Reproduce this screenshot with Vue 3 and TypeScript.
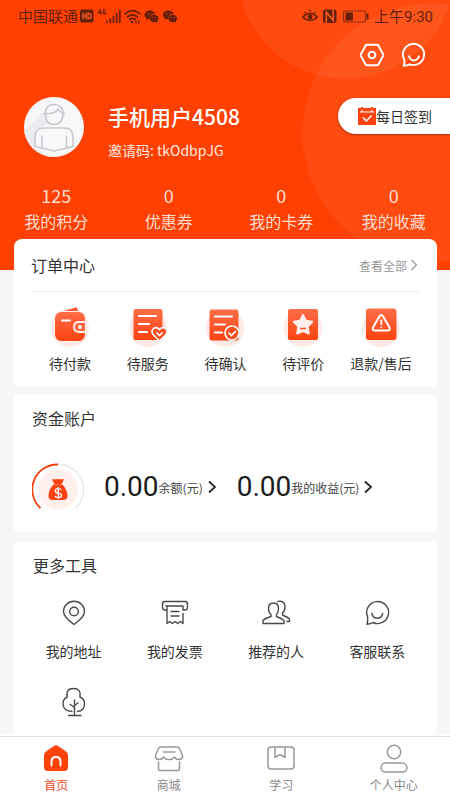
<script setup lang="ts">
interface Stat {
  value: string
  label: string
}

interface OrderEntry {
  icon: 'wallet' | 'service' | 'confirm' | 'star' | 'refund'
  label: string
}

interface Account {
  amount: string
  label: string
}

interface Tool {
  icon: 'pin' | 'invoice' | 'people' | 'chat' | 'tree'
  label?: string
}

interface Tab {
  icon: 'home' | 'shop' | 'book' | 'me'
  label: string
  active?: boolean
}

const stats: Stat[] = [
  { value: '125', label: '我的积分' },
  { value: '0', label: '优惠券' },
  { value: '0', label: '我的卡券' },
  { value: '0', label: '我的收藏' },
]

const orders: OrderEntry[] = [
  { icon: 'wallet', label: '待付款' },
  { icon: 'service', label: '待服务' },
  { icon: 'confirm', label: '待确认' },
  { icon: 'star', label: '待评价' },
  { icon: 'refund', label: '退款/售后' },
]

const accounts: Account[] = [
  { amount: '0.00', label: '余额(元)' },
  { amount: '0.00', label: '我的收益(元)' },
]

const tools: Tool[] = [
  { icon: 'pin', label: '我的地址' },
  { icon: 'invoice', label: '我的发票' },
  { icon: 'people', label: '推荐的人' },
  { icon: 'chat', label: '客服联系' },
  { icon: 'tree' },
]

const tabs: Tab[] = [
  { icon: 'home', label: '首页', active: true },
  { icon: 'shop', label: '商城' },
  { icon: 'book', label: '学习' },
  { icon: 'me', label: '个人中心' },
]
</script>

<template>
  <div class="page">
    <header class="hero">
      <div class="status">
        <div class="status-group">
          <span>中国联通</span>
          <svg class="status-icons" width="101" height="18" viewBox="0 0 101 18">
            <rect x="1" y="2.500" width="13.500" height="13" rx="2" fill="#64200a" />
            <path d="M4 5.800V12.200M7 5.800V12.200M4 9H7M9 6.300V11.700H10Q12 11.700 12 9Q12 6.300 10 6.300Z" fill="none" stroke="#ff5a26" stroke-width="1.300" />
            <path d="M21.500 2L19.200 5.600H22.900M21.900 3.600V7.400M26.400 3Q24.200 1.900 24.200 4.700Q24.200 7.600 26.400 6.800V5H25.200" fill="none" stroke="#64200a" stroke-width="1.100" />
            <path d="M28 13.500V16M31.300 11.500V16M34.500 9V16M37.700 6V16M40.800 3V16" stroke="#64200a" stroke-width="1.700" />
            <path d="M46 6.800Q53.500 0.500 61 6.800M48.500 9.800Q53.500 5.800 58.500 9.800M50.700 12.500Q53.500 10.500 56 12.300" fill="none" stroke="#64200a" stroke-width="1.700" stroke-linecap="round" />
            <circle cx="53" cy="15" r="1.300" fill="#64200a" />
            <path d="M57.500 13L55.500 15L57.500 17ZM59 13L61 15L59 17Z" fill="#64200a" />
            <g v-for="x in [65.500, 84]" :key="x" :transform="`translate(${x} 0)`">
              <path d="M5.500 3.500C2.400 3.500 0 5.400 0 8C0 9.400 .7 10.500 1.900 11.300L1.500 13L3.500 12L5.500 12.300C4.500 8.800 7.500 6.700 10.700 6.900C10 4.900 8 3.500 5.500 3.500Z" fill="#64200a" />
              <path d="M9.600 7.700C7 7.700 5.400 9.500 5.400 11.500C5.400 13.600 7.200 15.200 9.800 15.200L11.400 15L13 15.900L12.600 14.400C13.500 13.700 14 12.700 14 11.600C14 9.400 12.200 7.700 9.600 7.700Z" fill="#64200a" />
              <path d="M3.300 6.800H4.300M7 6.800H8M7.800 10.500H8.600M11 10.500H11.800" stroke="#ff4a12" stroke-width="1" />
            </g>
          </svg>
        </div>
        <div class="status-group">
          <svg width="68" height="18" viewBox="0 0 68 18">
            <path d="M0.800 10Q8 3 15.200 10Q8 17 0.800 10Z" fill="none" stroke="#64200a" stroke-width="1.500" />
            <circle cx="8" cy="10" r="2.400" fill="#64200a" />
            <path d="M2.500 4.800L4.200 6.500M8 2.500V5M13.500 4.800L11.800 6.500" stroke="#64200a" stroke-width="1.200" />
            <rect x="21" y="2.500" width="13.500" height="13.500" rx="2.500" fill="#64200a" />
            <path d="M24.300 16V5.200L31.200 13.500V2.500" fill="none" stroke="#ff5a24" stroke-width="1.500" />
            <rect x="41.500" y="4" width="22" height="11" rx="2" fill="none" stroke="#8c3015" stroke-width="1.200" />
            <rect x="43.500" y="5.500" width="7.500" height="8" fill="#64200a" />
            <path d="M65.500 6.500V12.500" stroke="#64200a" stroke-width="1.800" />
          </svg>
          <span>上午9:30</span>
        </div>
      </div>

      <div class="actions">
        <button type="button">
          <svg width="26" height="26" viewBox="0 0 26 26" fill="none" stroke="#fff" stroke-width="1.900" stroke-linejoin="round">
            <path d="M8 2.800H18Q19 2.800 19.500 3.700L24 12Q24.500 13 24 14L19.500 22.300Q19 23.200 18 23.200H8Q7 23.200 6.500 22.300L2 14Q1.500 13 2 12L6.500 3.700Q7 2.800 8 2.800Z" />
            <circle cx="13" cy="13" r="3.300" stroke-width="2.100" />
          </svg>
        </button>
        <button type="button">
          <svg width="26" height="26" viewBox="0 0 26 26" fill="none" stroke="#fff" stroke-width="1.900" stroke-linejoin="round" stroke-linecap="round">
            <path d="M3.200 17.500A10.600 10.600 0 1 1 8.600 22.300Q6 23.500 2.600 23.700Q3.800 20.800 3.200 17.500Z" />
            <path d="M8 14.300Q9.500 18.500 13 18.500Q16.500 18.500 18 14.300" />
          </svg>
        </button>
      </div>

      <div class="user">
        <svg width="60" height="60" viewBox="0 0 60 60">
          <defs><clipPath id="avatar-clip"><circle cx="30" cy="30" r="30" /></clipPath></defs>
          <g clip-path="url(#avatar-clip)">
            <rect width="60" height="60" fill="#f8f8fb" />
            <path d="M22 12L0 34V60H27L11 51V34L24 26Z" fill="#ebebf0" />
          </g>
          <g fill="none" stroke="#c9c9cd" stroke-width="1.600" stroke-linejoin="round">
            <path d="M21.500 16Q21.500 7.500 30 7.500Q39 7.500 39 17Q39 27.500 30 27.500Q21.500 27.500 21.500 17ZM19.500 16.500H25Q31 16.500 34 12Q36 16 41 16.500" />
            <path d="M11 49.500V40Q11 31 20 31H40Q49 31 49 40V49.500L30 54ZM18 38.500V51M42.500 38.500V51" />
          </g>
        </svg>
        <div class="identity">
          <h1>手机用户4508</h1>
          <p>邀请码: tkOdbpJG</p>
        </div>
        <button class="checkin" type="button">
          <svg width="18" height="18" viewBox="0 0 18 18">
            <path d="M0 1H3V0H5V1H13V0H15V1H18V18H0Z" fill="#ff4411" />
            <path d="M2 5H16M4 2.500V5M14 2.500V5" stroke="#fff" stroke-width="1" />
            <path d="M5 10.500L8.300 14L13.500 8.500" fill="none" stroke="#fff" stroke-width="1.500" />
          </svg>
          <span>每日签到</span>
        </button>
      </div>

      <ul class="stats">
        <li v-for="stat in stats" :key="stat.label">
          <span>{{ stat.value }}</span>
          <span>{{ stat.label }}</span>
        </li>
      </ul>
    </header>

    <main class="content">
      <section class="card orders">
        <div class="orders-head">
          <h2>订单中心</h2>
          <a href="#">
            <span>查看全部</span>
            <svg width="8" height="12" viewBox="0 0 8 12" fill="none" stroke="#999" stroke-width="1.200"><path d="M1.500 1L6.500 6L1.500 11" /></svg>
          </a>
        </div>
        <div class="order-grid">
          <button v-for="order in orders" :key="order.icon" type="button">
            <svg width="40" height="42" viewBox="0 0 40 42" fill="none">
              <defs>
                <linearGradient id="warm" x1="0" y1="0" x2="0" y2="1">
                  <stop offset="0" stop-color="#ff6d49" />
                  <stop offset="1" stop-color="#fb430f" />
                </linearGradient>
              </defs>
              <circle cx="20" cy="22" r="19" fill="#ffe9e6" />
              <template v-if="order.icon === 'wallet'">
                <path d="M10 6L26.500 1.200L28.500 5.500Z" fill="#fb5731" />
                <rect x="4.500" y="5.500" width="31" height="30" rx="7" fill="url(#warm)" stroke="#fff4f2" />
                <path d="M12 14.500H20" stroke="#fff" stroke-width="2" stroke-linecap="round" />
                <path d="M35 16H29Q24 16 24 21Q24 26 29 26H35" fill="#ff6841" stroke="#ffeae6" stroke-width="1.800" />
                <circle cx="30" cy="21" r="1.900" fill="#fff" />
              </template>
              <template v-else-if="order.icon === 'service'">
                <rect x="5.500" y="3" width="29" height="31" rx="2" fill="url(#warm)" />
                <path d="M11 10H28M11 18H21M11 26H19" stroke="#fff" stroke-width="2.200" stroke-linecap="round" />
                <path d="M31.500 35L25.500 29Q22.500 25 25.500 22.500Q28.500 20.300 31.500 23.500Q34.500 20.300 37.500 22.500Q40.500 25 37.500 29Z" fill="#fb4e20" stroke="#fff" stroke-width="1.600" />
                <path d="M28.500 26.500L31.500 29.500L34.500 26.500" stroke="#fff" stroke-width="1.600" />
              </template>
              <template v-else-if="order.icon === 'confirm'">
                <rect x="4.500" y="3.500" width="29" height="31" rx="2" fill="url(#warm)" />
                <path d="M10 10.500H27M10 18.500H20M10 26.500H17" stroke="#fff" stroke-width="2.200" stroke-linecap="round" />
                <circle cx="27" cy="27" r="7" fill="#fb4e20" stroke="#fff" stroke-width="1.600" />
                <path d="M23.500 26.500L26.300 29.500L31 25" stroke="#fff" stroke-width="1.700" />
              </template>
              <template v-else-if="order.icon === 'star'">
                <rect x="5" y="3" width="30" height="31" rx="2" fill="url(#warm)" />
                <path d="M20 9L22.900 14.800L29.300 15.800L24.700 20.400L25.800 27.500L20 25L14.200 27.500L15.300 20.400L10.700 15.800L17.100 14.800Z" fill="#ffeeec" stroke="#ffeeec" stroke-width="2" stroke-linejoin="round" />
                <path d="M17 22.500H23" stroke="#fb5023" stroke-width="1.500" />
              </template>
              <template v-else>
                <rect x="5" y="2.500" width="30.500" height="31.500" rx="3" fill="url(#warm)" />
                <path d="M18.300 10.500Q20.200 7.500 22.200 10.500L28.500 21.500Q29.500 24.500 26.500 24.500H14Q11 24.500 12 21.500Z" stroke="#fff" stroke-width="2" stroke-linejoin="round" />
                <path d="M20.300 13.500V19M20.300 20.500V22.200" stroke="#fff" stroke-width="1.700" />
              </template>
            </svg>
            <span>{{ order.label }}</span>
          </button>
        </div>
      </section>

      <section class="card funds">
        <h2>资金账户</h2>
        <div class="fund-row">
          <svg width="52" height="48" viewBox="0 0 52 48" fill="none">
            <path d="M26 1.500A25 25 0 0 1 43.500 45" stroke="#e8e8e8" stroke-width="1.500" />
            <path d="M26 1.500A25 25 0 0 0 8.500 45" stroke="#f43f0c" stroke-width="1.800" />
            <circle cx="26" cy="26.500" r="20" fill="#ffefed" />
            <path d="M20 16Q23 17.500 26 16Q29 17.500 32 16L30 20.500H22ZM21.500 21.500H30.500Q35.500 27 35.500 33Q35.500 37 31 37H21Q16.500 37 16.500 33Q16.500 27 21.500 21.500Z" fill="#fb4210" />
            <path d="M20.500 16.500L23 21.500H29L31.500 16.500Z" fill="#fb4210" />
            <path d="M29.200 27Q28.500 25.600 26.300 25.600Q23.300 25.600 23.300 27.900Q23.300 29.700 26.300 30.100Q29.500 30.500 29.500 32.500Q29.500 34.600 26.300 34.600Q23.700 34.600 23 33M26.300 24V36" stroke="#fff" stroke-width="1.400" />
          </svg>
          <a v-for="account in accounts" :key="account.label" class="account" href="#">
            <strong>{{ account.amount }}</strong>
            <span>{{ account.label }}</span>
            <svg width="10" height="14" viewBox="0 0 10 14" fill="none" stroke="#222" stroke-width="1.700"><path d="M2 1.500L8 7L2 12.500" /></svg>
          </a>
        </div>
      </section>

      <section class="card tools">
        <h2>更多工具</h2>
        <div class="tool-grid">
          <button v-for="tool in tools" :key="tool.icon" type="button">
            <svg width="30" height="30" viewBox="0 0 30 30" fill="none" stroke="#4a4a4a" stroke-width="1.400" stroke-linejoin="round">
              <template v-if="tool.icon === 'pin'">
                <path d="M15 26.500Q4.500 19 4.500 13.500A10.500 10.300 0 0 1 25.500 13.500Q25.500 19 15 26.500Z" />
                <circle cx="15" cy="13.500" r="4.300" />
              </template>
              <template v-else-if="tool.icon === 'invoice'">
                <path d="M7 12H5Q2.500 12 2.500 9V6Q2.500 3.500 5 3.500H25Q27.500 3.500 27.500 6V9Q27.500 12 25 12H23V8H5.500M7 8V25.500L9.700 23.500L12.300 25.500L15 23.500L17.700 25.500L20.300 23.500L23 25.500V15M10.500 13.500H19.500M10.500 18H19.500" />
              </template>
              <template v-else-if="tool.icon === 'people'">
                <path d="M2 25.500V22.500Q4 20.500 10 18.500V16.500Q7.500 14.500 7.500 10.500Q7.500 5 12.500 5Q17.500 5 17.500 10.500Q17.500 14.500 15.500 16.500V18.500Q21 20.500 23 22.500V25.500Z" />
                <path d="M16 4Q18 2.800 20 3.300Q24 4 24 9Q24 13 21.500 15V17Q27 19.500 28.500 21V23.500H25.500" />
              </template>
              <template v-else-if="tool.icon === 'chat'">
                <path d="M5.600 19A11 11 0 1 1 11 24.500Q8.500 26 5 26.200Q6 22.500 5.600 19Z" />
                <path d="M9.800 15.500Q11 20.300 15.300 20.300Q19.500 20.300 20.700 15.500" stroke-linecap="round" />
              </template>
              <template v-else>
                <path d="M13.500 24.500Q4 24.500 4 16.500Q4 12 8.200 10Q6.500 1.500 14.500 1.500Q22.500 1.500 21 10Q25.500 12 25.500 16.500Q25.500 24 18 24.500M15.500 12.500V28.500M10.500 17L15.500 20.500M19.500 15.500L15.500 18.500M9 28.500H22.500" />
              </template>
            </svg>
            <span v-if="tool.label">{{ tool.label }}</span>
          </button>
        </div>
      </section>
    </main>

    <nav class="tabbar">
      <div class="tabs">
        <a v-for="tab in tabs" :key="tab.icon" href="#" :class="{ active: tab.active }">
          <svg width="30" height="30" viewBox="0 0 30 30" fill="none" stroke="#999" stroke-width="1.500" stroke-linejoin="round">
            <template v-if="tab.icon === 'home'">
              <path d="M12.500 3.200Q15 1.500 17.500 3.200L25 8.500Q27 10 27 12V24Q27 28 23 28H7Q3 28 3 24V12Q3 10 5 8.500Z" fill="#ff4206" stroke="none" />
              <path d="M10.500 22.500V18.500Q10.500 14 15 14Q19.500 14 19.500 18.500V22.500" stroke="#fff" stroke-width="2" stroke-linecap="round" />
            </template>
            <template v-else-if="tab.icon === 'shop'">
              <path d="M7 4H23Q25 4 25.800 6L28.500 12.500Q29 16 25.500 16.500Q22.500 17 20.500 14Q18 17 15 16.500Q12 17 9.500 14Q7.500 17 4.500 16.500Q1 16 1.500 12.500L4.200 6Q5 4 7 4ZM4.500 18.500V26Q4.500 27.500 6 27.500H24Q25.500 27.500 25.500 26V18.500M9 9H21.500" />
            </template>
            <template v-else-if="tab.icon === 'book'">
              <rect x="2" y="4" width="26" height="22" rx="3" />
              <path d="M9 4V14.500L14 11.500L19 14.500V4" />
            </template>
            <template v-else>
              <circle cx="15" cy="9" r="6.700" />
              <rect x="2" y="20" width="26" height="9" rx="4.500" />
            </template>
          </svg>
          <span>{{ tab.label }}</span>
        </a>
      </div>
    </nav>
  </div>
</template>

<style>
body {
  margin: 0;
  background: #f7f7f7;
}
</style>

<style scoped>
.page {
  display: flex;
  flex-direction: column;
  min-height: 100vh;
  color: #333;
  font-family: "Noto Sans CJK SC", sans-serif;
  font-size: 14px;
}

h1,
h2,
p,
ul {
  margin: 0;
  padding: 0;
}

svg {
  display: block;
  flex: none;
}

button {
  padding: 0;
  border: 0;
  background: none;
  color: inherit;
  font: inherit;
}

a {
  color: inherit;
  text-decoration: none;
}

.hero {
  padding-bottom: 31px;
  background:
    radial-gradient(circle 130px at calc(100% - 18px) 133px, rgba(255, 255, 255, 0.06) 129px, transparent 130px),
    radial-gradient(circle 110px at calc(100% - 104px) -31px, rgba(255, 255, 255, 0.06) 109px, transparent 110px),
    #ff4000;
  color: #fff;
}

.status {
  display: flex;
  justify-content: space-between;
  height: 31px;
  padding: 0 17px 0 18px;
  color: #64200a;
  font-family: Roboto, "Noto Sans CJK SC", sans-serif;
  font-size: 15px;
}

.status-group {
  display: flex;
  align-items: center;
  gap: 4px;
}

.status-icons {
  margin-left: -3px;
}

.actions {
  display: flex;
  align-items: center;
  justify-content: flex-end;
  gap: 16px;
  height: 48px;
  padding-right: 23px;
}

.user {
  display: flex;
  align-items: flex-start;
  height: 60px;
  margin-top: 18px;
  padding-left: 24px;
}

.identity {
  flex: 1;
  margin-left: 24px;
}

.identity h1 {
  font-size: 21px;
  font-weight: 500;
  line-height: 38px;
}

.identity p {
  color: #ffe9e0;
  font-size: 14px;
  line-height: 30px;
}

.checkin {
  display: flex;
  align-items: center;
  height: 36px;
  margin-top: 1px;
  padding: 0 18px 0 20px;
  border-radius: 18px 0 0 18px;
  background: #fff;
  box-shadow: 0 1px 2px rgba(100, 20, 0, 0.5);
  color: #333;
}

.stats {
  display: grid;
  grid-template-columns: repeat(4, 1fr);
  margin-top: 25px;
  padding-bottom: 5px;
  list-style: none;
}

.stats li {
  display: flex;
  flex-direction: column;
  align-items: center;
  color: #ffdccf;
  font-size: 16px;
  line-height: 26px;
}

.stats span:first-child {
  font-size: 18px;
}

.content {
  display: flex;
  flex-direction: column;
  gap: 8px;
  margin-top: -31px;
  padding: 0 13px 0 14px;
}

.card {
  border-radius: 4px;
  background: #fff;
}

.card h2 {
  font-size: 16px;
  font-weight: 400;
  line-height: 46px;
}

.orders {
  padding: 0 17px 14px;
  border-radius: 8px 8px 4px 4px;
}

.orders-head {
  display: flex;
  align-items: center;
  justify-content: space-between;
  height: 52px;
  border-bottom: 1px solid #eee;
}

.orders-head a {
  display: flex;
  align-items: center;
  gap: 3px;
  padding-right: 2px;
  color: #999;
  font-size: 12px;
}

.order-grid {
  display: grid;
  grid-template-columns: repeat(5, 1fr);
  padding-top: 14px;
}

.order-grid button,
.tool-grid button {
  display: flex;
  flex-direction: column;
  align-items: center;
  line-height: 20px;
  white-space: nowrap;
}

.order-grid button {
  gap: 5px;
}

.funds {
  padding: 0 18px 21px;
}

.fund-row {
  display: flex;
  align-items: center;
  gap: 20px;
  padding-top: 22px;
}

.account {
  display: flex;
  align-items: center;
  color: #444;
  font-size: 12px;
}

.account strong {
  color: #1c1c1c;
  font-family: Roboto, sans-serif;
  font-size: 28px;
  font-weight: 400;
  line-height: 44px;
}

.account svg {
  margin-left: 4px;
}

.tools {
  margin-top: 2px;
  padding: 0 9px 17px;
}

.tools h2 {
  padding: 0 10px;
}

.tool-grid {
  display: grid;
  grid-template-columns: repeat(4, 1fr);
  row-gap: 26px;
  padding-top: 10px;
}

.tool-grid button {
  gap: 13px;
}

.tabbar {
  position: sticky;
  bottom: 0;
  margin-top: auto;
  border-top: 2px solid #fff;
  background: #fff;
}

.tabs {
  display: grid;
  grid-template-columns: repeat(4, 1fr);
  padding: 6px 0;
  border-top: 1px solid #ddd;
}

.tabs a {
  display: flex;
  flex-direction: column;
  align-items: center;
  gap: 2px;
  color: #888;
  font-size: 12px;
  line-height: 19px;
}

.tabs .active {
  color: #f04a1c;
}
</style>
